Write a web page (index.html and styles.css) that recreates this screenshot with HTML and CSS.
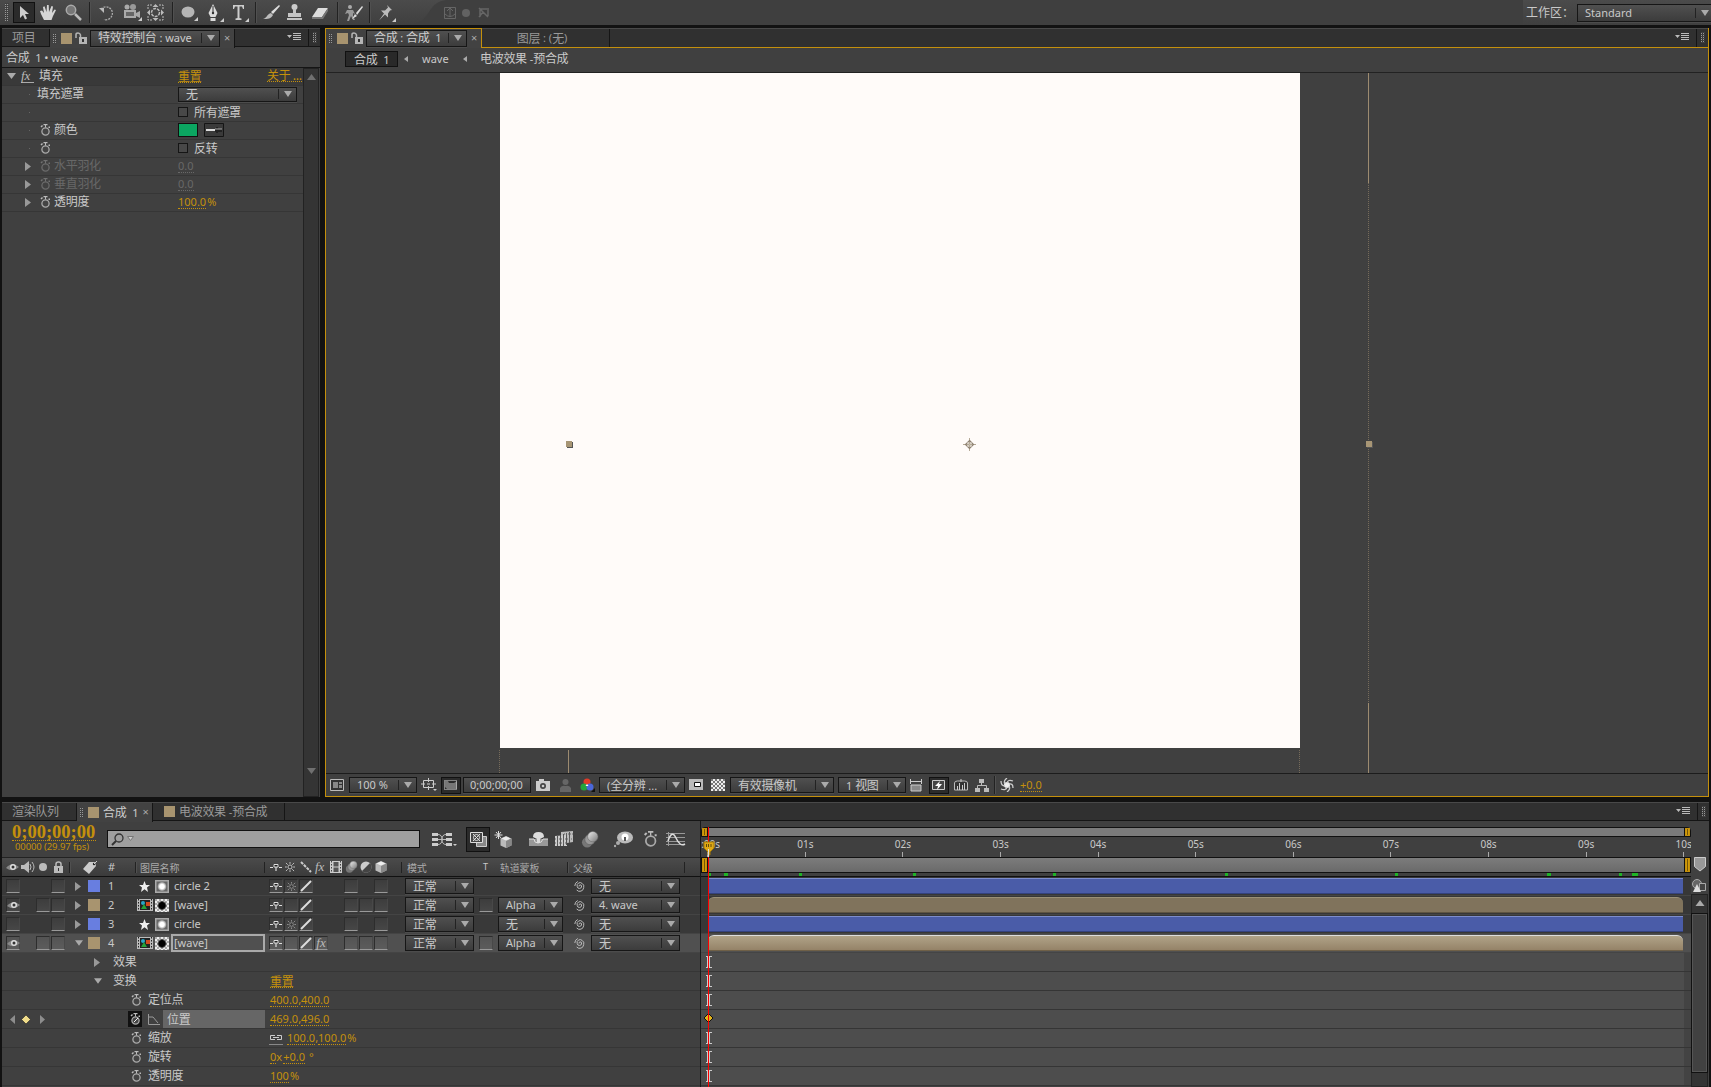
FILE: index.html
```html
<!DOCTYPE html>
<html lang="zh-CN">
<head>
<meta charset="utf-8">
<title>合成 1</title>
<link rel="stylesheet" href="styles.css">
</head>
<body>
<svg class="defs" aria-hidden="true">
<defs>
<linearGradient id="metal" x1="0" y1="0" x2="1" y2="1"><stop offset="0" stop-color="#eee"/><stop offset="1" stop-color="#777"/></linearGradient>
<radialGradient id="soft"><stop offset="0" stop-color="#fff"/><stop offset=".5" stop-color="#fff"/><stop offset="1" stop-color="#888"/></radialGradient>
<radialGradient id="hole"><stop offset="0" stop-color="#000"/><stop offset=".6" stop-color="#000"/><stop offset="1" stop-color="#000" stop-opacity=".1"/></radialGradient>
<pattern id="chk" width="4" height="4" patternUnits="userSpaceOnUse"><path fill="#eee" d="M0 0h4v4H0z"/><path fill="#777" d="M0 0h2v2H0zM2 2h2v2H2z"/></pattern>
<pattern id="chkl" width="4" height="4" patternUnits="userSpaceOnUse"><path fill="#eee" d="M0 0h4v4H0z"/><path fill="#aaa" d="M0 0h2v2H0zM2 2h2v2H2z"/></pattern>
</defs>
<symbol id="watch" viewBox="0 0 12 12"><circle cx="6.500" cy="7.500" r="3.600" fill="#444" stroke="#aaa" stroke-width="1.300"/><path d="M4.500 0h4v1.300h-4zM6 1h1v2.500H6zM1.500 2.500l1.500-1.500 1 1-1.500 1.500zM9.500 2.500h1.500v1.500H9.500z" fill="#bbb"/></symbol>
<symbol id="right" viewBox="0 0 6 9"><path d="M0 0l6 4.500L0 9z" fill="#999"/></symbol>
<symbol id="down" viewBox="0 0 9 6"><path d="M0 0h9L4.500 6z" fill="#aaa"/></symbol>
<symbol id="up" viewBox="0 0 9 6"><path d="M0 6h9L4.500 0z" fill="currentColor"/></symbol>
<symbol id="menu" viewBox="0 0 14 9"><path d="M0 2h5L2.500 5zM6 0h8v1H6zM6 2h8v1H6zM6 4h8v1H6zM6 6h8v1H6z" fill="#bbb"/></symbol>
<symbol id="lock" viewBox="0 0 12 12"><path d="M4 5h8v7H4z" fill="#b5b5b5"/><path d="M7 7h2v3H7z" fill="#333"/><path d="M1 6V2.500Q1 1 3 1T5.500 3v3" fill="none" stroke="#b5b5b5" stroke-width="1.500"/></symbol>
<symbol id="eye" viewBox="0 0 13 10"><path d="M0 6Q6-1 13 5 7 11 0 6z" fill="#888"/><circle cx="7" cy="5" r="3" fill="#ddd"/><circle cx="7" cy="5" r="1.500" fill="#333"/></symbol>
<symbol id="shy" viewBox="0 0 12 8"><path d="M0 4.500h3M9 4.500h3M6 2v6" stroke="#ddd" stroke-width="1.200" fill="none"/><path d="M4 1.500h4v2.500H4z" fill="#222" stroke="#ddd"/></symbol>
<symbol id="sun" viewBox="0 0 11 11"><circle cx="5.500" cy="5.500" r="2.200" fill="#333" stroke="currentColor"/><path d="M5.500 0v2M5.500 9v2M0 5.500h2M9 5.500h2M1 1l2 2M8 8l2 2M10 1L8 3M3 8l-2 2" stroke="currentColor"/></symbol>
<symbol id="slash" viewBox="0 0 12 12"><path d="M1 11L11 1" stroke="#ddd" stroke-width="2"/></symbol>
<symbol id="star" viewBox="0 0 11 11"><path d="M5.500 0L7 4h4L8 6.500 9 11 5.500 8.300 2 11l1-4.500L0 4h4z" fill="#eee"/></symbol>
<symbol id="solid" viewBox="0 0 14 13"><path d="M0 0h14v13H0z" fill="#aaa"/><path d="M1.500 1.500h11v10h-11z" fill="#666"/><circle cx="7" cy="6.500" r="4.500" fill="url(#soft)"/></symbol>
<symbol id="maskc" viewBox="0 0 14 13"><path d="M0 0h14v13H0z" fill="url(#chkl)"/><circle cx="7" cy="6.500" r="5" fill="url(#hole)"/></symbol>
<symbol id="comp" viewBox="0 0 16 12"><path d="M0 0h16v12H0z" fill="#bbb"/><path d="M3 1h10v10H3z" fill="#222"/><path d="M1.500 0v12M14.500 0v12" stroke="#222" stroke-dasharray="1.500"/><circle cx="6" cy="4" r="2" fill="#29a6c9"/><path d="M9 3h4v4H9z" fill="#d0491d"/><path d="M7 5l3 5H4z" fill="#25a338"/></symbol>
<symbol id="whip" viewBox="0 0 12 12"><path d="M5 6.500a1.300 1.300 0 0 1 2.600-.500a2.200 2.200 0 0 1-4.400.500a3 3 0 0 1 5-3a3.500 3.500 0 0 1 1.500 4a4 4 0 0 1-7 2.500M.8 6a5 5 0 0 1 3-4.500" fill="none" stroke="#bbb"/></symbol>
<symbol id="film" viewBox="0 0 12 12"><path d="M0 0h12v12H0z" fill="#ccc"/><path d="M3.500 1h5v4.500h-5zM3.500 6.500h5V11h-5z" fill="#555"/><path d="M1.500 0v12M10.500 0v12" stroke="#444" stroke-dasharray="1.500"/></symbol>
<symbol id="balls" viewBox="0 0 18 18"><circle cx="6" cy="12" r="5.500" fill="#777"/><circle cx="9" cy="9" r="5.500" fill="#999" stroke="#555" stroke-width=".6"/><circle cx="12" cy="6" r="5.500" fill="url(#metal)" stroke="#666" stroke-width=".6"/></symbol>
<symbol id="cube" viewBox="0 0 12 12"><path d="M6 0l5.500 2.500v7L6 12 .5 9.500v-7z" fill="#bbb"/><path d="M6 5l5.500-2.500v7L6 12z" fill="#888"/><path d="M6 .5l4.500 2L6 4.500l-4.500-2z" fill="#eee"/></symbol>
<symbol id="ibeam" viewBox="0 0 6 12"><path d="M0 .5h2M4 .5h2M0 11.500h2M4 11.500h2M1.500 0v12M3.500 0v12" stroke="#ccc" fill="none"/></symbol>
</svg>

<header class="toolbar">
<i class="grip"></i>
<span class="tool on"><svg width="22" height="21"><path d="M6 3v12l3-3 2 4.500 2-1-2-4.500h4z" fill="#ccc"/></svg></span>
<svg width="16" height="17"><path d="M4 16L1 10 0 7l2-.5L4 9 3 3l1.500-.8L6.500 8 7 1h1.700L9 8l2.500-6 1.500.5L12 9l2.500-3.500L16 6l-3 6-1.500 4z" fill="#d5d5d5"/></svg>
<svg width="17" height="17"><circle cx="6" cy="6" r="4.700" fill="#777" stroke="#aaa" stroke-width="1.500"/><path d="M10 10l6 6" stroke="#bbb" stroke-width="2.500"/></svg>
<i class="sep"></i>
<svg width="16" height="16"><path d="M2 4A6.500 6.500 0 1 1 5 14.500" fill="none" stroke="#aaa" stroke-width="1.300" stroke-dasharray="2 1"/><path d="M0 3h5v5z" fill="#bbb"/></svg>
<svg width="19" height="17"><circle cx="4" cy="3" r="2.500" fill="#aaa"/><circle cx="10" cy="3" r="3" fill="#999"/><path d="M1 6h12v8H1zM13 9l4-2v7l-4-2z" fill="#aaa"/><path d="M3 8h8v4H3z" fill="#666"/><path d="M19 13v4h-4z" fill="#ccc"/></svg>
<svg width="17" height="17"><path d="M1 5V1h4M12 1h4v4M16 12v4h-4M5 16H1v-4" fill="none" stroke="#bbb" stroke-dasharray="2 1"/><circle cx="8.500" cy="8.500" r="4" fill="none" stroke="#bbb" stroke-width="1.500" stroke-dasharray="3 1"/><path d="M8.500 0l3 3h-6zM8.500 17l3-3h-6zM0 8.500l3-3v6zM17 8.500l-3-3v6z" fill="#bbb"/></svg>
<i class="sep"></i>
<svg width="18" height="17"><ellipse cx="7" cy="8" rx="6.500" ry="5.500" fill="#b5b5b5"/><path d="M17 13v4h-4z" fill="#ccc"/></svg>
<svg width="17" height="18"><path d="M6 0l4.500 9-2 4h-5l-2-4zM3.500 14h5v3h-5z" fill="#ddd"/><path d="M6 2v8" stroke="#333"/><circle cx="6" cy="9" r="1.200" fill="#333"/><path d="M17 14v4h-4z" fill="#ccc"/></svg>
<svg width="18" height="18"><path d="M1 5V1h11v4h-1l-1-2.500H7.500V14l2 .5V16h-6v-1.500l2-.5V2.500H3L2 5z" fill="#ccc"/><path d="M17 14v4h-4z" fill="#ccc"/></svg>
<i class="sep"></i>
<svg width="17" height="16"><path d="M16 0L8 7l2 2 7-8z" fill="#ddd"/><path d="M8 8l2 2c-2 4-5 4-10 4 4-1 4-5 8-6z" fill="#bbb"/></svg>
<svg width="15" height="17"><circle cx="7.500" cy="3" r="3" fill="#ccc"/><path d="M6 5h3v5H6zM1 9h13v4H1zM0 14h15v2H0z" fill="#c5c5c5"/></svg>
<svg width="17" height="14"><path d="M6 2h10l-6 9H0z" fill="#ddd"/><path d="M0 11h10l6-9v3l-5 8H0z" fill="#777"/></svg>
<i class="sep"></i>
<svg width="18" height="16"><circle cx="5" cy="2" r="2" fill="#aaa"/><path d="M2 5h6l2 4-2-1v3l2 4H8l-2-4-2 5H2l2-6-1-2-3 1z" fill="#999"/><path d="M17 1l-6 7 1 2 6-8zM10 9l2 2-5 3z" fill="#ddd"/></svg>
<i class="sep"></i>
<svg width="18" height="18"><path d="M9 1l5 5-2 .5-2 3 0 4-3-3-6 6 5-7-3-3h4l3-3z" fill="#bbb"/><path d="M18 14v4h-4z" fill="#ccc"/></svg>
<svg class="axes" width="1115" height="25"><path d="M0 25C26 23 17 0 41 0H1115V25z" fill="#3f3f3f"/><path d="M36.500 7.500h11v11h-11zM42 9v8M39 11l3-3 3 3M37 14q5 5 10 0" fill="none" stroke="#666"/><circle cx="58" cy="13" r="4" fill="#626262"/><path d="M71 8l9 9M72 17V9h7M80 8v8M71 17l4-5" stroke="#666" stroke-width="1.500" fill="none"/></svg>
<span class="wslabel">工作区：</span>
<div class="dd ws"><span>Standard</span><b></b></div>
</header>

<main class="upper">
<section class="effects">
<div class="tabs">
<span class="tab cjk">项目</span>
<div class="tab active"><i class="grip"></i><i class="chip"></i><svg width="12" height="12"><use href="#lock"/></svg><div class="dd"><span><em>特效控制台</em> : wave</span><b></b></div><i class="x">×</i></div>
<span class="fill"></span><svg class="menu" width="14" height="9"><use href="#menu"/></svg><i class="bound"></i><i class="grip end"></i>
</div>
<div class="path"><em>合成</em>&nbsp; 1 • wave</div>
<div class="fxbody">
<div class="fxrows">
<div class="fx head"><svg width="9" height="6"><use href="#down"/></svg><span class="fxi">fx</span><span class="t">填充</span><span class="v"><u>重置</u></span><span class="about"><u>关于 ...</u></span></div>
<div class="fx"><i class="dot"></i><i></i><span class="t pull">填充遮罩</span><div class="dd v none"><span><em>无</em></span><b></b></div></div>
<div class="fx"><i class="dot"></i><i></i><i></i><span class="v"><i class="check"></i><em>所有遮罩</em></span></div>
<div class="fx"><i class="dot"></i><svg width="12" height="12"><use href="#watch"/></svg><span class="t">颜色</span><span class="v"><i class="swatch"></i><svg class="dropper" width="20" height="14"><path d="M.5.500h19v13H.5z" fill="#3a3a3a" stroke="#151515"/><path d="M2 7h10" stroke="#ddd" stroke-width="2"/><path d="M11 6h7v3h-7zM12 4h2v6h-2z" fill="#222"/><path d="M11 6h7" stroke="#aaa"/></svg></span></div>
<div class="fx"><i class="dot"></i><svg width="12" height="12"><use href="#watch"/></svg><i></i><span class="v"><i class="check"></i><em>反转</em></span></div>
<div class="fx off"><svg width="6" height="9"><use href="#right"/></svg><svg class="dim" width="12" height="12"><use href="#watch"/></svg><span class="t">水平羽化</span><span class="v"><u>0.0</u></span></div>
<div class="fx off"><svg width="6" height="9"><use href="#right"/></svg><svg class="dim" width="12" height="12"><use href="#watch"/></svg><span class="t">垂直羽化</span><span class="v"><u>0.0</u></span></div>
<div class="fx"><svg width="6" height="9"><use href="#right"/></svg><svg width="12" height="12"><use href="#watch"/></svg><span class="t">透明度</span><span class="v o"><u>100.0</u>&#8202;%</span></div>
</div>
<div class="scroll idle"><svg width="9" height="6"><use href="#up"/></svg><svg class="flip" width="9" height="6"><use href="#up"/></svg></div>
</div>
</section>

<section class="viewer">
<div class="tabs">
<div class="tab active"><i class="grip"></i><i class="chip"></i><svg width="12" height="12"><use href="#lock"/></svg><div class="dd"><span><em>合成</em> : <em>合成</em>&nbsp; 1</span><b></b></div><i class="x">×</i></div>
<span class="tab layer"><em>图层</em>&nbsp;: (<em>无</em>)</span>
<span class="fill"></span><svg class="menu" width="14" height="9"><use href="#menu"/></svg><i class="bound"></i><i class="grip end"></i>
</div>
<div class="crumbs"><span class="cur"><em>合成</em>&nbsp; 1</span><svg width="4" height="6"><path d="M4 0v6L0 3z" fill="#aaa"/></svg><span>wave</span><svg width="4" height="6"><path d="M4 0v6L0 3z" fill="#aaa"/></svg><span><em>电波效果</em> -<em>预合成</em></span></div>
<div class="stage">
<div class="canvas"></div>
<svg class="overlay" width="1382" height="700">
<path d="M173.500 677v23M973.500 677v23M1042.500 110v520" stroke="#776c5b" stroke-dasharray="1 1"/>
<path d="M242.500 677v23M1042.500 0v110M1042.500 630v70" stroke="#9d8b70"/>
<path d="M241 369h6v6h-6zM1041 369h6v6h-6z" fill="#555"/>
<path d="M240 368h6v6h-6zM1040 368h6v6h-6z" fill="#a89675"/>
<path d="M643.500 365v13M637 371.500h13" stroke="#b5a997"/><path d="M643.500 367.500l4 4-4 4-4-4z" fill="none" stroke="#8d8071" stroke-width="1.200"/><path d="M641 369l5 5M646 369l-5 5" stroke="#c5bbae" stroke-width=".7"/>
</svg>
</div>
<footer class="vbar">
<svg width="14" height="12"><path d="M.5.500h13v11H.5z" fill="#333" stroke="#bbb"/><path d="M3 3h5v6H3zM9 3h3v2H9zM9 6h3v3H9z" fill="#888"/></svg>
<div class="dd"><span>100 %</span><b></b></div>
<svg width="16" height="14"><path d="M2.500 2.500h10v7h-10zM7.500 0v4M7.500 8v4M0 6h4M11 6h4M6 6h3" fill="none" stroke="#ccc"/><path d="M12 11h4l-2 2z" fill="#ccc"/></svg>
<span class="tool on"><svg width="18" height="15"><path d="M3 3h3l1 2h5l3-2v8H5L3 9z" fill="#777"/><path d="M2.500 2.500h12v9h-12z" stroke="#ddd" fill="none" stroke-dasharray="1 1"/></svg></span>
<div class="dd tc"><span>0;00;00;00</span></div>
<svg width="14" height="12"><path d="M0 2h3V0h5v2h6v10H0z" fill="#ccc"/><circle cx="7" cy="7" r="3" fill="#444"/><circle cx="7" cy="7" r="1.300" fill="#ccc"/></svg>
<svg width="11" height="13"><circle cx="5.500" cy="3" r="3" fill="#666"/><path d="M0 13V9q2-3 5.500-2Q9 6 11 9v4z" fill="#666"/></svg>
<svg width="16" height="14"><circle cx="7" cy="4" r="3.500" fill="#e13a28"/><circle cx="4" cy="9" r="3.500" fill="#24a43c"/><circle cx="10" cy="9" r="3.500" fill="#4a67db"/><path d="M7 6l1.500 2h-3z" fill="#fff"/><path d="M15 10v4h-4z" fill="#111"/></svg>
<div class="dd"><span>(<em>全分辨</em> ...</span><b></b></div>
<svg width="14" height="12"><path d="M0 0h14v11H0z" fill="#bbb"/><path d="M5.500 3.500h6v4h-6z" fill="#fff" stroke="#111"/></svg>
<svg width="14" height="12"><path d="M0 0h14v12H0z" fill="url(#chk)"/></svg>
<div class="dd"><span><em>有效摄像机</em></span><b></b></div>
<div class="dd"><span>1 <em>视图</em></span><b></b></div>
<svg width="12" height="13"><path d="M0 2.500h12M.5 0v5M11.500 0v5" stroke="#ccc"/><path d="M1 6h10v6H1z" fill="#888" stroke="#ccc"/></svg>
<span class="tool on"><svg width="18" height="15"><path d="M2.500 2.500h12v9h-12z" fill="#444" stroke="#ccc"/><path d="M10 3L5 8h3l-1 4 5-6H9z" fill="#fff"/></svg></span>
<svg width="14" height="12"><path d="M.5 11V4q0-2 3-2h7q3 0 3 2v7z" fill="#333" stroke="#bbb"/><path d="M3.500 11V7M5.500 11V4M8.500 11V6M10.500 11V4M7 0v3" stroke="#ccc"/></svg>
<svg width="14" height="13"><path d="M4 0h5v4H4zM0 9h5v4H0zM9 9h5v4H9z" fill="#bbb"/><path d="M6.500 4v3M2.500 9V6.500h9V9" stroke="#bbb" fill="none"/></svg>
<i class="sep"></i>
<svg width="14" height="14"><circle cx="7" cy="7" r="3" fill="#eee"/><path d="M7 0q-4 3-2 6M13 3Q8 1 7 5M13 10q0-5-4-4M7 14q4-3 2-6M1 11q5 2 6-2M1 3q0 5 4 5" stroke="#ccc" stroke-width="1.300" fill="none"/></svg>
<span class="o"><u>+0.0</u></span>
</footer>
</section>
</main>

<section class="timeline">
<div class="tabs">
<span class="tab cjk">渲染队列</span>
<div class="tab active"><i class="grip"></i><i class="chip"></i><span><em>合成</em>&nbsp; 1</span><i class="x">×</i></div>
<span class="tab pre"><i class="chip"></i><span><em>电波效果</em> -<em>预合成</em></span></span>
<span class="fill"></span><svg class="menu" width="14" height="9"><use href="#menu"/></svg><i class="bound"></i><i class="grip end"></i>
</div>
<div class="tbody">
<div class="left">
<div class="controls">
<div class="time"><strong>0;00;00;00</strong><small>00000 (29.97 fps)</small></div>
<div class="search"><svg width="26" height="14"><circle cx="9" cy="5" r="4" fill="none" stroke="#333" stroke-width="1.300"/><path d="M6 8l-4 4" stroke="#333" stroke-width="2"/><path d="M17.500 3.500h6l-3 4z" fill="#ccc" stroke="#777"/></svg></div>
<svg width="25" height="14"><path d="M0 1h6v3H0zM0 6h6v3H0zM0 11h6v3H0zM14 1h6v3h-6zM14 6h6v3h-6zM14 11h6v3h-6z" fill="#ccc"/><path d="M6 2.500q4 0 4 5t4 5M6 7.500h8M6 12.500q4 0 4-5t4-5" stroke="#bbb" fill="none"/><path d="M21 12h4l-2 2z" fill="#ccc"/></svg>
<span class="tool on"><svg width="24" height="24"><path d="M9.500 8.500h10v10h-10z" fill="#888" stroke="#ccc"/><path d="M3.500 4.500h12v10h-12z" fill="#444" stroke="#ddd"/><path d="M6 6l7 7M13 6l-7 7" stroke="#ddd"/><circle cx="9.500" cy="9.500" r="3" fill="none" stroke="#ddd"/></svg></span>
<svg width="18" height="17"><path d="M4.500 0v8M.5 4h8M2 1l5 6M7 1L2 7" stroke="#ddd"/><use href="#cube" x="6" y="5" width="12" height="12"/></svg>
<svg width="19" height="14"><path d="M0 7h19v7H0z" fill="#999"/><path d="M0 7h5q0 4 4 4t5-4h5" stroke="#ddd" fill="none"/><path d="M4 5q0-5 5.500-5T15 5l-4 2v4H8V7z" fill="#ddd"/></svg>
<svg width="19" height="16"><path d="M6 1l12-1v11l-12 2z" fill="#bbb"/><path d="M0 5l12-1v11H0z" fill="#ccc"/><path d="M2.500 5v10M5.500 4v11M8.500 3v12M11.500 2v12M14.500 1v11" stroke="#555"/><path d="M0 8h12M0 12h12M9 3h9M12 8h6" stroke="#666" stroke-dasharray="1 1"/></svg>
<svg width="18" height="17"><use href="#balls"/></svg>
<svg width="20" height="17"><ellipse cx="11" cy="6.500" rx="8" ry="6" fill="#bbb"/><circle cx="4" cy="12" r="2" fill="#aaa"/><circle cx="1" cy="15" r="1.200" fill="#aaa"/><circle cx="11" cy="6" r="3.500" fill="#fff"/><path d="M10 6h2v4h-2z" fill="#555"/></svg>
<svg width="16" height="16"><use href="#watch"/></svg>
<svg width="20" height="14"><path d="M0 1.500h19M0 5.500h19M0 9.500h19M0 12.500h19M2.500 0v14" stroke="#999"/><path d="M2 9Q6-3 10 6t9 6" stroke="#ddd" stroke-width="1.500" fill="none"/></svg>
</div>
<div class="cols heads">
<svg width="13" height="10"><use href="#eye"/></svg><svg width="14" height="12"><path d="M0 4h3l5-4v12L3 8H0z" fill="#bbb"/><path d="M9 3q2 3 0 6M11 1q4 5 0 10" stroke="#bbb" fill="none"/></svg><svg width="12" height="10"><circle cx="7" cy="5" r="4" fill="#bbb"/></svg><svg width="12" height="12"><path d="M3 5h9v7H3z" fill="#bbb"/><path d="M5 6V3q0-2 2.500-2T10 3v3" stroke="#bbb" stroke-width="1.500" fill="none"/><path d="M7 7h1v3H7z" fill="#333"/></svg>
<i class="sep"></i><svg class="tag" width="15" height="13"><path d="M0 8l6-7h6l1 4-7 8z" fill="#ccc"/><circle cx="11" cy="3" r="1.200" fill="#222"/><path d="M11 3l3-3" stroke="#ccc"/></svg><span>#</span><i class="sep"></i><span class="label nm">图层名称</span>
<svg width="12" height="8"><use href="#shy"/></svg><svg class="lit" width="10" height="10"><use href="#sun"/></svg><svg width="12" height="12"><path d="M1 1l10 10" stroke="#ccc" stroke-width="2" stroke-dasharray="3 1"/></svg><span class="fxi">fx</span><svg width="12" height="12"><use href="#film"/></svg><svg width="13" height="12"><use href="#balls"/></svg><svg width="12" height="12"><circle cx="6" cy="6" r="5.500" fill="#ccc"/><path d="M2 10A5.500 5.500 0 0 0 10 2z" fill="#444"/></svg><svg width="12" height="12"><use href="#cube"/></svg>
<span class="label mode">模式</span><span class="tl">T</span><span class="label">轨道蒙板</span><i class="sep"></i><span class="label par">父级</span>
</div>
<div class="cols row">
<i class="cell"></i><i></i><i></i><i class="cell"></i><svg class="tw" width="6" height="9"><use href="#right"/></svg><i class="lab blue"></i><span>1</span><svg class="src" width="11" height="11"><use href="#star"/></svg><svg width="14" height="13"><use href="#solid"/></svg><span class="nm">circle 2</span>
<i class="cell"><svg width="12" height="8"><use href="#shy"/></svg></i><i class="cell"><svg width="9" height="9"><use href="#sun"/></svg></i><i class="cell"><svg width="12" height="12"><use href="#slash"/></svg></i><i></i><i></i><i class="cell"></i><i></i><i class="cell"></i>
<div class="dd"><span><em>正常</em></span><b></b></div><i></i><i></i><svg width="12" height="12"><use href="#whip"/></svg><div class="dd"><span><em>无</em></span><b></b></div>
</div>
<div class="cols row">
<i class="cell"><svg width="13" height="10"><use href="#eye"/></svg></i><i></i><i class="cell"></i><i class="cell"></i><svg class="tw" width="6" height="9"><use href="#right"/></svg><i class="lab"></i><span>2</span><svg width="16" height="12"><use href="#comp"/></svg><svg width="14" height="13"><use href="#maskc"/></svg><span class="nm">[wave]</span>
<i class="cell"><svg width="12" height="8"><use href="#shy"/></svg></i><i class="cell"></i><i class="cell"><svg width="12" height="12"><use href="#slash"/></svg></i><i></i><i></i><i class="cell"></i><i class="cell"></i><i class="cell"></i>
<div class="dd"><span><em>正常</em></span><b></b></div><i class="cell"></i><div class="dd"><span>Alpha</span><b></b></div><svg width="12" height="12"><use href="#whip"/></svg><div class="dd"><span>4. wave</span><b></b></div>
</div>
<div class="cols row">
<i class="cell"></i><i></i><i></i><i class="cell"></i><svg class="tw" width="6" height="9"><use href="#right"/></svg><i class="lab blue"></i><span>3</span><svg class="src" width="11" height="11"><use href="#star"/></svg><svg width="14" height="13"><use href="#solid"/></svg><span class="nm">circle</span>
<i class="cell"><svg width="12" height="8"><use href="#shy"/></svg></i><i class="cell"><svg width="9" height="9"><use href="#sun"/></svg></i><i class="cell"><svg width="12" height="12"><use href="#slash"/></svg></i><i></i><i></i><i class="cell"></i><i></i><i class="cell"></i>
<div class="dd"><span><em>正常</em></span><b></b></div><i></i><div class="dd"><span><em>无</em></span><b></b></div><svg width="12" height="12"><use href="#whip"/></svg><div class="dd"><span><em>无</em></span><b></b></div>
</div>
<div class="cols row sel">
<i class="cell"><svg width="13" height="10"><use href="#eye"/></svg></i><i></i><i class="cell"></i><i class="cell"></i><svg class="tw" width="8" height="6"><use href="#down"/></svg><i class="lab"></i><span>4</span><svg width="16" height="12"><use href="#comp"/></svg><svg width="14" height="13"><use href="#maskc"/></svg><span class="nm edit">[wave]</span>
<i class="cell"><svg width="12" height="8"><use href="#shy"/></svg></i><i class="cell"></i><i class="cell"><svg width="12" height="12"><use href="#slash"/></svg></i><i class="cell"><span class="fxi">fx</span></i><i></i><i class="cell"></i><i class="cell"></i><i class="cell"></i>
<div class="dd"><span><em>正常</em></span><b></b></div><i class="cell"></i><div class="dd"><span>Alpha</span><b></b></div><svg width="12" height="12"><use href="#whip"/></svg><div class="dd"><span><em>无</em></span><b></b></div>
</div>
<div class="prop group"><i></i><svg width="6" height="9"><use href="#right"/></svg><span class="t">效果</span></div>
<div class="prop group"><i></i><svg width="8" height="6"><use href="#down"/></svg><span class="t">变换</span><span class="o"><u class="cj">重置</u></span></div>
<div class="prop"><i></i><svg width="12" height="12"><use href="#watch"/></svg><span class="t">定位点</span><span class="o"><u>400.0</u>,<u>400.0</u></span></div>
<div class="prop"><svg class="keys" width="36" height="11"><path d="M5 1v9L0 5.500zM30 1v9l5-4.500z" fill="#8d8d8d"/><path d="M16 1l4.500 4.500L16 10l-4.500-4.500z" fill="#f0dc8a" stroke="#222" stroke-width=".6"/></svg><svg class="wbox" width="14" height="16"><path d="M0 0h14v16H0z" fill="#111"/><use href="#watch" x="1" y="2" width="12" height="12"/><path d="M6 11l4-4" stroke="#eee"/></svg><span class="t pos"><svg width="12" height="11"><path d="M.5 0v10.500H12M1 3h4l5 6" stroke="#999" fill="none"/></svg><em>位置</em></span><span class="o"><u>469.0</u>,<u>496.0</u></span></div>
<div class="prop"><i></i><svg width="12" height="12"><use href="#watch"/></svg><span class="t">缩放</span><span class="o"><svg class="link" width="14" height="13"><path d="M6 3.500H1.500v4H6M8 3.500h4.500v4H8M4 5.500h6" fill="none" stroke="#ccc"/><path d="M0 12.500h14" stroke="#888"/></svg><u>100.0</u>,<u>100.0</u>&#8202;%</span></div>
<div class="prop"><i></i><svg width="12" height="12"><use href="#watch"/></svg><span class="t">旋转</span><span class="o"><u>0</u>x&#8202;<u>+0.0</u>&nbsp;&#8202;°</span></div>
<div class="prop"><i></i><svg width="12" height="12"><use href="#watch"/></svg><span class="t">透明度</span><span class="o"><u>100</u>&#8202;%</span></div>
</div>

<div class="right">
<div class="nav"><i class="h"></i><span></span><i class="h"></i></div>
<div class="ruler"><span>0:00s</span><span>01s</span><span>02s</span><span>03s</span><span>04s</span><span>05s</span><span>06s</span><span>07s</span><span>08s</span><span>09s</span><span>10s</span></div>
<div class="nav work"><i class="h"></i><span></span><i class="h"></i></div>
<svg class="cache" width="990" height="4"><path d="M7 0h3v3H7zM23 0h4v3h-4zM98 0h3v3h-3zM212 0h3v3h-3zM352 0h3v3h-3zM524 0h3v3h-3zM694 0h3v3h-3zM846 0h4v3h-4zM918 0h3v3h-3zM931 0h6v3h-6z" fill="#1fb527"/></svg>
<div class="track"><i class="bar blue"></i></div>
<div class="track"><i class="bar tan"></i></div>
<div class="track"><i class="bar blue"></i></div>
<div class="track sel"><i class="bar lit"></i></div>
<div class="track p"><svg width="6" height="12"><use href="#ibeam"/></svg></div>
<div class="track p"><svg width="6" height="12"><use href="#ibeam"/></svg></div>
<div class="track p"><svg width="6" height="12"><use href="#ibeam"/></svg></div>
<div class="track p"><svg class="key" width="11" height="10"><path d="M5.500.500L10 5 5.500 9.500 1 5z" fill="#e5b41a" stroke="#111"/></svg></div>
<div class="track p"><svg width="6" height="12"><use href="#ibeam"/></svg></div>
<div class="track p"><svg width="6" height="12"><use href="#ibeam"/></svg></div>
<div class="track p"><svg width="6" height="12"><use href="#ibeam"/></svg></div>
<i class="redline"></i>
<svg class="playhead" width="12" height="16"><path d="M1 1h10v6l-4 4v3H5v-3L1 7z" fill="#dfa816" stroke="#a37a08"/><path d="M3.500 3v3M5.500 3v3M8 3v3" stroke="#644b05"/><path d="M5.500 8v8" stroke="#ddd"/></svg>
</div>
<div class="rail">
<svg width="12" height="15"><path d="M.5.500h11v9L6 14 .5 9.500z" fill="#999" stroke="#ccc"/></svg>
<svg width="15" height="14"><circle cx="5" cy="5" r="4.500" fill="#666" stroke="#aaa"/><path d="M7.500 4.500h6v7h-6z" fill="#444" stroke="#aaa"/><path d="M5 5l4 8H1z" fill="#ddd"/></svg>
<div class="scroll"><svg width="10" height="6"><use href="#up"/></svg><i class="thumb"></i></div>
</div>
</div>
</section>
</body>
</html>
```
FILE: styles.css
```css
*{box-sizing:border-box}
body{margin:0;width:1711px;height:1087px;overflow:hidden;background:#121212;color:#c9c9c9;font:11px/14px "Noto Sans","Noto Sans CJK SC",sans-serif;display:flex;flex-direction:column}
i,em{font-style:normal}
em,.cjk,.t,.cj{font-family:"Noto Sans CJK SC",sans-serif;font-size:12px;letter-spacing:-.3px;font-style:normal}
svg{display:block;flex:none}
.defs{width:0;height:0;position:absolute}
u{text-decoration:none;border-bottom:1px dotted currentColor;line-height:12px;display:inline-block}
.o,.o u{color:#c4900c}
.grip{width:4px;height:11px;flex:none;background:repeating-linear-gradient(#404040 0 1px,transparent 1px 2px),repeating-linear-gradient(90deg,#999 0 1px,transparent 1px 2px)}
.sep{width:1px;background:#222;box-shadow:1px 0 #505050}
.fxi{font:italic 13px/12px "Liberation Serif",serif;color:#bbb}
.dim{opacity:.4}
.lit{color:#ccc}

/* Dropdown buttons */
.dd{display:flex;align-items:center;height:16px;border:1px solid #161616;background:linear-gradient(#505050,#3c3c3c);box-shadow:0 1px #4c4c4c;padding-left:7px;white-space:nowrap;min-width:0}
.dd span{flex:1;line-height:14px}
.dd b{width:18px;height:10px;flex:none;border-left:1px solid #222;display:flex;align-items:center;padding-left:5px}
.dd b::after{content:"";border:4px solid transparent;border-top:6px solid #aaa;border-bottom:0}

/* Tool strip */
.toolbar{height:25px;display:grid;grid-template-columns:8px 27px 25px 24px 10px 24px 24px 25px 9px 26px 25px 23px 8px 24px 25px 25px 8px 24px 9px 26px 1122px 51px 137px;padding-left:5px;align-items:center;background:linear-gradient(#4b4b4b,#3f3f3f)}
.toolbar .grip{height:19px}
.toolbar .sep{height:21px}
.tool.on{background:#2b2b2b;border:1px solid #111;width:22px;height:21px;overflow:hidden}
.toolbar .axes{margin-left:4px}
.toolbar>svg:nth-of-type(n+1){max-height:25px}
.wslabel{font-size:12px;white-space:nowrap}
.ws{width:137px;height:18px}

.upper{height:769px;margin:3px 2px 5px;display:flex;gap:5px;flex:none}
.tabs{height:19px;display:flex;background:#303030;border-top:1px solid #494949;border-bottom:1px solid #151515;flex:none}
.tab{border-right:1px solid #151515;color:#999;display:flex;align-items:center;height:17px;padding:0 11px 1px;white-space:nowrap}
.tab.active{background:#424242;color:#ccc;padding:0 0 1px 3px;height:19px;gap:4px}
.tab svg,.tab .dd{margin-left:-1px}
.tab .dd{flex:none}
.tab .dd span{padding-bottom:1px}
.chip{width:11px;height:11px;background:#a8946f;flex:none}
.tab .x{color:#aaa;font-size:11px;width:8px}
.fill{flex:1}
.menu{margin:4px 7px 0 0}
.bound{width:1px;background:#151515;margin-right:4px}
.grip.end{margin:3px 3px 0 0}

/* Effect controls */
.effects{width:318px;background:#404040;display:flex;flex-direction:column}
.effects .tab.cjk{width:48px;padding-left:10px}
.effects .tab.active{width:185px}
.effects .tab .dd{width:130px}
.effects .tab .dd,.viewer .tab .dd{height:17px}
.path{height:21px;padding:3px 0 0 4px;border-bottom:1px solid #151515;line-height:13px}
.fxbody{flex:1;display:flex}
.fxrows{width:301px}
.fx{height:18px;border-bottom:1px solid #363636;display:grid;grid-template-columns:14px 15px 124px 90px auto;padding:0 0 1px 23px;align-items:center;white-space:nowrap}
.fx .t{line-height:12px;margin-top:-2px}
.fx .pull{margin-left:-17px}
.fx.head{background:#393939;grid-template-columns:14px 18px 139px 89px auto;padding-left:5px}
.fx.head .fxi{border-bottom:1px solid #aaa;width:13px}
.fx.head u{font-family:"Noto Sans CJK SC",sans-serif;color:#c4900c;font-size:12px;letter-spacing:-.3px}
.fx .v{display:flex;align-items:center;height:14px}
.fx .v.none{width:119px;height:15px}
.fx .v.o,.fx.off .v{display:block}
.fx.off{color:#686868}
.dot{width:1px;height:1px;background:#666;margin-left:4px}
.check{width:10px;height:10px;border:1px solid #151515;background:#484848;margin-right:6px}
.swatch{width:20px;height:14px;border:1px solid #111;background:#0ba661;margin-right:6px}
.dropper{margin-top:0}
.scroll{background:#343434;border:1px solid #222;color:#aaa;display:flex;flex-direction:column;align-items:center}
.idle{width:16px;color:#707070;justify-content:space-between;padding:5px 0 22px}
.flip{transform:scaleY(-1)}

/* Composition viewer */
.viewer{width:1384px;background:#404040;border:1px solid #c4900c;border-top:0;display:flex;flex-direction:column}
.viewer .tabs{height:20px;border-bottom:1px solid #c4900c}
.viewer .tab.active{width:156px;border-right:1px solid #c4900c;border-top:1px solid #c4900c;margin-top:-1px;height:20px}
.viewer .tab .dd{width:101px}
.viewer .layer{width:128px;height:18px;justify-content:center;padding-right:18px}
.crumbs{height:25px;border-bottom:1px solid #222;display:grid;grid-template-columns:59px 18px 41px 17px auto;padding:0 0 3px 19px;align-items:center;white-space:nowrap}
.crumbs .cur{background:#292929;border:1px solid #111;width:53px;height:16px;line-height:13px;padding-left:8px}
.stage{height:700px;position:relative;padding-left:174px;display:flex;overflow:hidden}
.canvas{width:800px;height:675px;background:#fffbf9}
.overlay{position:absolute;left:0;top:0}
.vbar{height:23px;border-top:1px solid #1c1c1c;display:grid;grid-template-columns:19px 72px 20px 22px 73px 24px 20px 19px 90px 22px 19px 108px 72px 19px 25px 21px 19px 6px 20px auto;padding-left:4px;align-items:center}
.vbar .dd{margin-right:4px}
.vbar .dd.tc{margin-right:5px;padding-left:6px}
.vbar .tool.on{width:20px;height:17px}
.vbar .sep{height:18px}

/* Timeline */
.timeline{height:285px;width:1707px;margin-left:2px;background:#404040;display:flex;flex-direction:column;flex:none}
.timeline .cjk{width:75px;padding:0 10px 1px}
.timeline .tab.active{width:76px}
.timeline .tab.active .x{margin-left:0}
.tab.pre{width:132px;gap:4px}
.tbody{display:flex;height:266px}
.left{width:699px;border-right:1px solid #1a1a1a}
.controls{height:37px;display:grid;grid-template-columns:95px 325px 34px 28px 35px 26px 26px 33px 28px 24px auto;padding-left:10px;align-items:center;border-bottom:1px solid #222}
.time{color:#c4900c;display:flex;flex-direction:column;margin-top:-1px}
.time strong{font:bold 18.500px/15px "Liberation Serif",serif;border-bottom:1px dotted;width:84px;height:16px}
.time small{font-size:9.500px;line-height:11px;padding-left:3px;white-space:nowrap;letter-spacing:-.1px}
.search{width:313px;height:18px;border:1px solid #111;background:#9f9f9f;padding:2px}
.controls .tool.on{width:24px;height:25px}
.cols{display:grid;grid-template-columns:15px 15px 15px 21px 16px 20px 29px 18px 15px 99px 15px 15px 15px 15px 15px 15px 15px 31px 74px 19px 76px 17px 92px;padding-left:4px;align-items:center;height:19px;white-space:nowrap}
.cols.heads{background:linear-gradient(#4b4b4b,#3b3b3b);border-bottom:1px solid #111;grid-template-columns:15px 15px 15px 18px 14px 25px 27px 1px 134px 15px 15px 15px 15px 15px 15px 15px 31px 77px 17px 67px 6px 112px}
.heads .sep{height:11px}
.heads .nm{width:129px;border-right:1px solid #222}
.heads .mode{border-left:1px solid #222;margin-left:-5px;padding-left:5px}
.heads .par{border-right:1px solid #222}
.label{font-family:"Noto Sans CJK SC",sans-serif;font-size:10px;line-height:11px;color:#aaa;letter-spacing:-.2px}
.tl{font-size:9px}
.row{background:#393939;border-bottom:1px solid #444}
.row.sel{background:#505050}
.row .dd{margin-right:5px}
.row .dd+svg{margin-left:0}
.row .dd:nth-of-type(2){margin-right:11px}
.row .dd:last-child{margin-right:3px}
.cell{width:14px;height:14px;border:1px solid #2d2d2d;border-right-color:#484848;border-bottom-color:#999;background:linear-gradient(#ffffff05,#ffffff12);display:flex;align-items:center;justify-content:center;color:#999}
.tw{margin-left:3px}
.lab{width:12px;height:12px;background:#a8946f}
.lab.blue{background:#687ee0}
.src{margin-left:2px}
.nm{padding-left:4px}
.edit{border:2px solid #aaa;width:94px;height:18px;line-height:13px;margin-left:1px;padding-left:1px}
.prop{height:19px;border-bottom:1px solid #363636;display:grid;grid-template-columns:123px 18px 122px auto;align-items:center;padding-left:5px;white-space:nowrap}
.prop .o{display:flex;align-items:center}
.prop.group{grid-template-columns:87px 19px 157px auto}
.prop .t{line-height:14px;margin-top:-2px}
.prop .t.pos{display:flex;align-items:center;width:117px;background:linear-gradient(90deg,transparent 15px,#666 15px);height:18px;gap:7px;margin-top:0}
.wbox{margin-left:-2px}
.keys{margin-left:3px}
.link{margin:0 4px 0 -1px}

.right{width:990px;position:relative;padding-top:6px;overflow:hidden;flex:none}
.nav{height:10px;display:flex;border:1px solid #111;background:#111;gap:1px;border-radius:4px 4px 0 0}
.nav .h{width:5px;background:repeating-linear-gradient(90deg,#d09a08 0 1px,#765607 1px 2px);border:1px solid #c4900c;flex:none}
.nav span{flex:1;background:#7b7b7b}
.ruler{height:20px;display:flex;margin-left:-42px;width:1100px}
.ruler span{width:97.600px;flex:none;text-align:center;font-size:10px;line-height:14px;background:linear-gradient(#aaa,#aaa) 50% 100%/1px 5px no-repeat}
.nav.work{height:16px;border-radius:0}
.work span{background:linear-gradient(#7c7c7c,#6a6a6a)}
.cache{height:4px;border-bottom:1px solid #111}
.track{height:19px;border-bottom:1px solid #454545;background:#373737;padding:1px 0 0 7px;display:flex}
.track.sel{background:#505050}
.track.p{background:linear-gradient(90deg,#4d4d4d 983px,#434343 983px);border-bottom-color:#353535;padding:3px 0 0 5px}
.key{margin-left:-3px}
.bar{width:975px;height:16px;border-top:1px solid #7d8dcc;border-bottom:1px solid #34427e}
.bar.blue{background:#4a5ca8}
.bar.tan{background:#80735c;border-color:#9a9077 #9a9077 #5e5442;border-radius:6px 6px 0 0}
.bar.lit{background:linear-gradient(#b0a388,#958368);border-color:#ddd #ddd #6f6047;border-radius:6px 6px 0 0}
.redline{position:absolute;left:7px;top:6px;width:1px;height:260px;background:#f00}
.playhead{position:absolute;left:2px;top:20px}
.rail{width:17px;padding-top:36px;display:flex;flex-direction:column;align-items:center}
.rail>svg+svg{margin-top:7px}
.rail .scroll{width:17px;flex:1;margin-top:1px;padding-top:5px}
.thumb{width:15px;height:158px;margin-top:8px;background:#414141;border:1px solid #555;outline:1px solid #111}
```
